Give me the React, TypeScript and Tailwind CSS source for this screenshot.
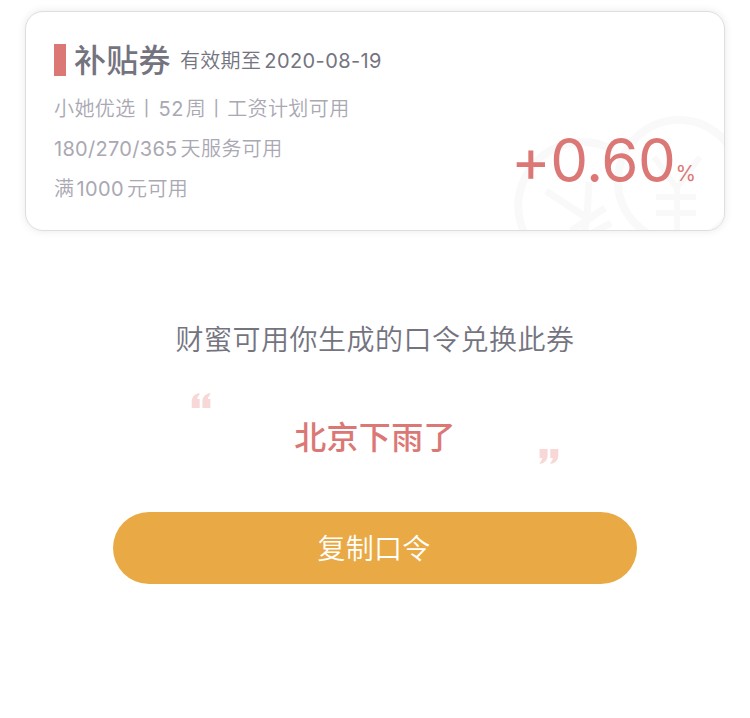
import React from "react";

const CoinWatermark = () => (
  <svg
    className="absolute right-0 bottom-0 h-[120px] w-[220px]"
    viewBox="505 110 220 120"
    fill="none"
    stroke="#f9f9f9"
    strokeWidth="8"
  >
    <path d="M614 150A64 64 0 1 0 640 236" />
    <path d="M547 191L588 218M590 182L588 218L584 240M572 231L606 208M584 238L612 223" strokeWidth="7" />
    <circle cx="680" cy="181" r="61" />
    <path d="M655 157L678 188L701 157M678 188V232M657 197H697M657 213H697" strokeWidth="6" />
  </svg>
);

const QuoteMark = (props: { className?: string }) => (
  <svg className={props.className} width="20" height="16" viewBox="0 0 20 16" fill="#f8d7d7">
    <path d="M8.5 0V1.5C7 3 6.3 4.5 6.2 6H8.7V15H.7V9C.7 4 3.3 1 8.5 0Z" />
    <path d="M19.2 0V1.5C17.7 3 17 4.5 16.9 6H19.4V15H11.4V9C11.4 4 14 1 19.2 0Z" />
  </svg>
);

const CouponCard = () => (
  <div className="relative mx-[25px] mt-[11px] h-[220px] overflow-hidden rounded-[18px] border border-[#dedede] bg-white shadow-[0_0_9px_rgba(0,0,0,0.09)]">
    <CoinWatermark />
    <div className="relative flex h-full justify-between pr-7 pl-7">
      <div className="pt-7">
        <div className="flex h-10 items-center whitespace-nowrap text-[#74747f]">
          <span className="h-8 w-3 bg-[#db7875]" />
          <span className="ml-2 pt-px text-[32px] leading-10 font-medium tracking-[0.3px]">补贴券</span>
          <span className="ml-[9px] flex pt-px text-xl leading-10 font-[350] tracking-[0.35px]">
            有效期至<span className="ml-[3px] font-normal tracking-[0.4px]">2020-08-19</span>
          </span>
        </div>
        <div className="mt-[9px] text-xl leading-10 font-[350] tracking-[0.4px] whitespace-nowrap text-[#a9a8b3]">
          <div className="flex">
            <span>小她优选</span>
            <span className="w-[22px] text-center">丨</span>
            <span className="mr-[2px] ml-px font-normal">52</span>
            <span>周</span>
            <span className="w-[21px]">丨</span>
            <span>工资计划可用</span>
          </div>
          <div className="flex">
            <span className="font-normal tracking-[0.3px]">180/270/365</span>
            <span className="ml-[3px]">天服务可用</span>
          </div>
          <div className="flex">
            满<span className="mr-[3px] ml-[2px] font-normal">1000</span>元可用
          </div>
        </div>
      </div>
      <div className="flex items-baseline pt-[108px] leading-[80px] text-[#db7875]">
        <span className="text-[60px] tracking-[-0.5px]">+0.60</span>
        <span className="relative -top-px text-[21px]">%</span>
      </div>
    </div>
  </div>
);

export default function App() {
  return (
    <div className="h-[718px] overflow-hidden bg-white font-[Inter,'Noto_Sans_CJK_SC',sans-serif]">
      <CouponCard />
      <div className="mt-[89px] text-center text-[28px] leading-10 font-[350] tracking-[0.5px] text-[#74747f]">
        财蜜可用你生成的口令兑换此券
      </div>
      <div className="mx-auto mt-[33px] flex h-[72px] w-[368px] justify-between">
        <QuoteMark />
        <div className="pt-[25px] text-[32px] leading-10 font-medium tracking-[0.3px] text-[#db7875]">北京下雨了</div>
        <QuoteMark className="relative -top-px self-end rotate-180" />
      </div>
      <button className="mx-auto mt-[47px] block h-[72px] w-[524px] rounded-full bg-[#e9a945] pt-px pr-0.5 text-[28px] font-[350] tracking-[0.3px] text-white">
        复制口令
      </button>
    </div>
  );
}
